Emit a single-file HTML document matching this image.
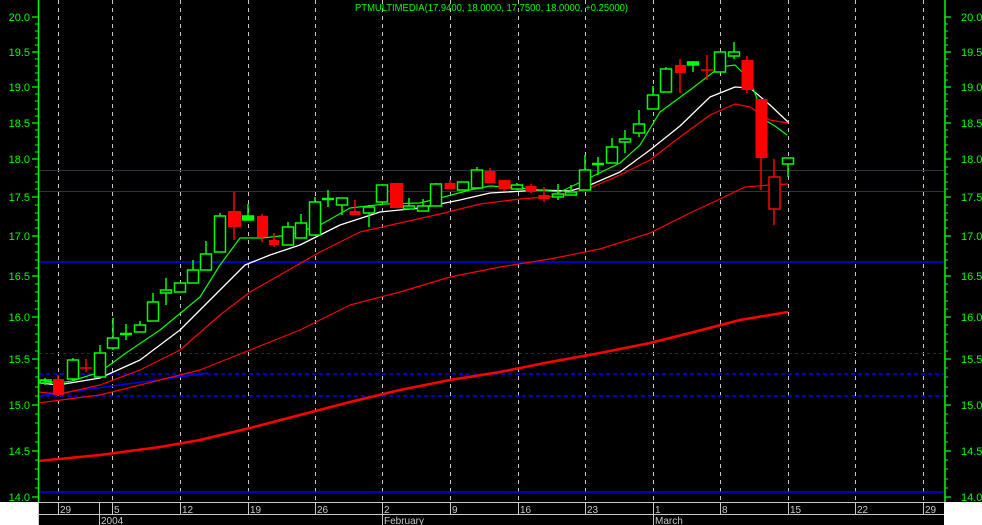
<!DOCTYPE html>
<html><head><meta charset="utf-8"><style>
html,body{margin:0;padding:0;background:#000;width:982px;height:525px;overflow:hidden}
svg{display:block;font-family:"Liberation Sans",sans-serif}
</style></head><body>
<svg width="982" height="525" viewBox="0 0 982 525" xmlns="http://www.w3.org/2000/svg">
<rect width="982" height="525" fill="#000"/>
<g stroke="#c8c8c8" stroke-width="1" stroke-dasharray="4,4">
<line x1="58.5" y1="0" x2="58.5" y2="502"/><line x1="112.5" y1="0" x2="112.5" y2="502"/>
<line x1="180.5" y1="0" x2="180.5" y2="502"/><line x1="248.5" y1="0" x2="248.5" y2="502"/>
<line x1="315.5" y1="0" x2="315.5" y2="502"/><line x1="382.5" y1="0" x2="382.5" y2="502"/>
<line x1="450.5" y1="0" x2="450.5" y2="502"/><line x1="518.5" y1="0" x2="518.5" y2="502"/>
<line x1="585.5" y1="0" x2="585.5" y2="502"/><line x1="653.5" y1="0" x2="653.5" y2="502"/>
<line x1="720.5" y1="0" x2="720.5" y2="502"/><line x1="788.5" y1="0" x2="788.5" y2="502"/>
<line x1="855.5" y1="0" x2="855.5" y2="502"/><line x1="923.5" y1="0" x2="923.5" y2="502"/>
</g>
<g stroke="#0000ff" fill="none">
<line x1="39" y1="170.5" x2="944" y2="170.5" stroke="#303040"/>
<line x1="39" y1="191.5" x2="944" y2="191.5" stroke="#303040"/>
<line x1="39" y1="262" x2="944" y2="262" stroke-width="1.5"/>
<line x1="39" y1="353.5" x2="944" y2="353.5" stroke="#262626" stroke-dasharray="3,3"/>
<line x1="39" y1="374" x2="944" y2="374" stroke-width="1.5" stroke-dasharray="4,3"/>
<line x1="39" y1="396" x2="944" y2="396" stroke-width="1.5" stroke-dasharray="4,3"/>
<line x1="39" y1="492" x2="944" y2="492" stroke-width="1.5"/>
<line x1="39" y1="396" x2="208" y2="373" stroke-width="1.5"/>
</g>
<g fill="none" stroke-linejoin="round">
<polyline stroke="#ff0000" stroke-width="2.5" points="38,461 100,455 160,447 200,440 250,428 300,415 350,402 400,390 450,380 500,372 550,362 600,353 650,343 690,333 740,320 788,312"/>
<polyline stroke="#ff0000" stroke-width="1.2" points="38,403 100,395 160,380 200,370 250,350 300,330 350,305 400,292 450,277 500,267 550,259 600,249 650,233 690,213 720,199 745,187 770,185 788,184"/>
<polyline stroke="#ff0000" stroke-width="1.2" points="38,392 60,394 100,385 140,370 180,350 220,315 250,292 280,275 320,252 360,232 400,223 440,214 480,204 520,199 560,196 590,188 620,175 650,160 680,137 710,115 735,104 750,107 770,120 788,123"/>
<polyline stroke="#ffffff" stroke-width="1.3" points="40,383 58,385 100,378 140,360 180,330 220,290 245,265 270,255 300,245 340,225 380,212 420,208 460,200 490,193 540,190 570,191 590,185 620,172 650,150 680,126 710,97 735,87 750,88 770,105 788,122"/>
<polyline stroke="#00ff00" stroke-width="1.2" points="40,380 58,383 72,381 100,372 126,353 160,330 200,297 220,265 240,238 262,238 290,235 320,225 350,208 385,204 420,203 440,198 470,190 490,186 520,188 560,192 585,180 620,163 640,145 660,112 690,90 720,67 735,65 750,80 765,120 775,126 787,135"/>
</g>
<g stroke-width="1.5">
<g stroke="#00ff00" fill="none">
<line x1="45" y1="378" x2="45" y2="385"/><rect x="40" y="380" width="11" height="3"/>
<line x1="73" y1="358" x2="73" y2="381"/><rect x="67.5" y="360" width="11" height="19" fill="#000"/>
<line x1="100" y1="345" x2="100" y2="378"/><rect x="94.5" y="353" width="11" height="24" fill="#000"/>
<line x1="113" y1="318" x2="113" y2="350"/><rect x="107.5" y="338" width="11" height="10" fill="#000"/>
<line x1="126" y1="324" x2="126" y2="340"/><line x1="120" y1="334" x2="132" y2="334" stroke-width="2.5"/>
<line x1="140" y1="321" x2="140" y2="332"/><rect x="134.5" y="325" width="11" height="7" fill="#000"/>
<line x1="153" y1="293" x2="153" y2="321"/><rect x="147.5" y="302" width="11" height="19" fill="#000"/>
<line x1="166" y1="278" x2="166" y2="305"/><rect x="160.5" y="290" width="11" height="3" fill="#000"/>
<line x1="180" y1="283" x2="180" y2="292"/><rect x="174.5" y="283" width="11" height="9" fill="#000"/>
<line x1="193" y1="260" x2="193" y2="283"/><rect x="187.5" y="270" width="11" height="13" fill="#000"/>
<line x1="206" y1="241" x2="206" y2="270"/><rect x="200.5" y="254" width="11" height="16" fill="#000"/>
<line x1="220" y1="213" x2="220" y2="252"/><rect x="214.5" y="216" width="11" height="36" fill="#000"/>
<line x1="248" y1="204" x2="248" y2="220"/><rect x="242.5" y="216" width="11" height="4" fill="#00ff00"/>
<line x1="288" y1="222" x2="288" y2="245"/><rect x="282.5" y="227" width="11" height="18" fill="#000"/>
<line x1="301" y1="214" x2="301" y2="238"/><rect x="295.5" y="223" width="11" height="15" fill="#000"/>
<line x1="315" y1="197" x2="315" y2="235"/><rect x="309.5" y="202" width="11" height="33" fill="#000"/>
<line x1="328" y1="190" x2="328" y2="207"/><line x1="322" y1="199" x2="334" y2="199" stroke-width="2.5"/>
<line x1="342" y1="198" x2="342" y2="215"/><rect x="336.5" y="198" width="11" height="7" fill="#000"/>
<line x1="369" y1="205" x2="369" y2="227"/><rect x="363.5" y="207" width="11" height="6" fill="#000"/>
<line x1="382" y1="185" x2="382" y2="202"/><rect x="376.5" y="185" width="11" height="17" fill="#000"/>
<line x1="409" y1="198" x2="409" y2="209"/><rect x="403.5" y="206" width="11" height="3" fill="#000"/>
<line x1="423" y1="199" x2="423" y2="211"/><rect x="417.5" y="206" width="11" height="5" fill="#000"/>
<line x1="436" y1="183" x2="436" y2="206"/><rect x="430.5" y="184" width="11" height="22" fill="#000"/>
<line x1="463" y1="182" x2="463" y2="190"/><rect x="457.5" y="182" width="11" height="8" fill="#000"/>
<line x1="477" y1="167" x2="477" y2="188"/><rect x="471.5" y="170" width="11" height="18" fill="#000"/>
<line x1="517" y1="183" x2="517" y2="190"/><rect x="511.5" y="185" width="11" height="4" fill="#000"/>
<line x1="558" y1="184" x2="558" y2="200"/><rect x="552.5" y="194" width="11" height="3" fill="#000"/>
<line x1="571" y1="185" x2="571" y2="195"/><rect x="565.5" y="192" width="11" height="3" fill="#000"/>
<line x1="585" y1="155" x2="585" y2="190"/><rect x="579.5" y="170" width="11" height="20" fill="#000"/>
<line x1="598" y1="157" x2="598" y2="175"/><line x1="592" y1="164" x2="604" y2="164" stroke-width="2.5"/>
<line x1="612" y1="138" x2="612" y2="163"/><rect x="606.5" y="147" width="11" height="16" fill="#000"/>
<line x1="625" y1="130" x2="625" y2="153"/><rect x="619.5" y="139" width="11" height="3" fill="#000"/>
<line x1="639" y1="110" x2="639" y2="137"/><rect x="633.5" y="124" width="11" height="9" fill="#000"/>
<line x1="653" y1="86" x2="653" y2="109"/><rect x="647.5" y="95" width="11" height="14" fill="#000"/>
<line x1="666" y1="67" x2="666" y2="92"/><rect x="660.5" y="69" width="11" height="23" fill="#000"/>
<line x1="693" y1="61" x2="693" y2="72"/><rect x="687.5" y="62" width="11" height="3" fill="#00ff00"/>
<line x1="720" y1="52" x2="720" y2="72"/><rect x="714.5" y="52" width="11" height="20" fill="#000"/>
<line x1="734" y1="42" x2="734" y2="59"/><rect x="728.5" y="52" width="11" height="4" fill="#000"/>
<line x1="788" y1="158" x2="788" y2="177"/><rect x="782.5" y="158" width="11" height="6" fill="#000"/>
</g>
<g stroke="#ff0000" fill="#ff0000">
<line x1="58" y1="375" x2="58" y2="396"/><rect x="53" y="379" width="11" height="16" stroke="none"/>
<line x1="86" y1="359" x2="86" y2="372"/><line x1="80" y1="368" x2="92" y2="368"/>
<line x1="234" y1="192" x2="234" y2="240"/><rect x="228" y="211" width="13" height="16" stroke="none"/>
<line x1="262" y1="214" x2="262" y2="242"/><rect x="257" y="216" width="11" height="21" stroke="none"/>
<line x1="274" y1="233" x2="274" y2="247"/><rect x="269" y="240" width="10" height="5" stroke="none"/>
<line x1="355" y1="200" x2="355" y2="215"/><rect x="349.5" y="211" width="11" height="4" stroke="none"/>
<line x1="396" y1="183" x2="396" y2="208"/><rect x="390" y="183" width="13" height="25" stroke="none"/>
<line x1="450" y1="180" x2="450" y2="189"/><rect x="444.5" y="183" width="11" height="6" stroke="none"/>
<line x1="490" y1="168" x2="490" y2="183"/><rect x="484.5" y="171" width="11" height="12" stroke="none"/>
<line x1="504" y1="180" x2="504" y2="191"/><rect x="498.5" y="180" width="12" height="9" stroke="none"/>
<line x1="531" y1="184" x2="531" y2="193"/><rect x="525.5" y="186" width="11" height="6" stroke="none"/>
<line x1="544" y1="187" x2="544" y2="202"/><rect x="538.5" y="195" width="11" height="4" stroke="none"/>
<line x1="680" y1="59" x2="680" y2="93"/><rect x="675" y="65" width="11" height="8" stroke="none"/>
<line x1="707" y1="55" x2="707" y2="80"/><line x1="701" y1="70" x2="713" y2="70"/>
<line x1="747" y1="56" x2="747" y2="93"/><rect x="741.5" y="60" width="12" height="30" stroke="none"/>
<line x1="761" y1="99" x2="761" y2="190"/><rect x="755.5" y="99" width="12" height="59" stroke="none"/>
<line x1="774" y1="159" x2="774" y2="225"/><rect x="769" y="177" width="11" height="32" fill="#000"/>
</g>
</g>
<text x="355" y="11" fill="#00ff00" font-size="10.5" textLength="273" lengthAdjust="spacingAndGlyphs">PTMULTIMEDIA(17.9400, 18.0000, 17.7500, 18.0000, +0.25000)</text>
<line x1="38.5" y1="0" x2="38.5" y2="502" stroke="#00ff00" stroke-width="1.5"/>
<line x1="945" y1="0" x2="945" y2="502" stroke="#00ff00" stroke-width="1.5"/>
<g stroke="#00ff00" stroke-width="1.2" fill="none">
<path d="M32 17h6M32 52h6M32 87h6M32 123h6M32 159h6M32 197h6M32 236h6M32 276h6M32 317h6M32 359h6M32 405h6M32 451h6M32 497h6
M945 17h6M945 52h6M945 87h6M945 123h6M945 159h6M945 197h6M945 236h6M945 276h6M945 317h6M945 359h6M945 405h6M945 451h6M945 497h6"/>
<path stroke-width="1" d="M35 24h3M35 31h3M35 38h3M35 45h3M35 59h3M35 66h3M35 73h3M35 80h3M35 94h3M35 101h3M35 109h3M35 116h3M35 130h3M35 137h3M35 145h3M35 152h3M35 167h3M35 174h3M35 182h3M35 189h3M35 205h3M35 213h3M35 220h3M35 228h3M35 244h3M35 252h3M35 260h3M35 268h3M35 284h3M35 292h3M35 301h3M35 309h3M35 325h3M35 334h3M35 342h3M35 351h3M35 368h3M35 377h3M35 387h3M35 396h3M35 414h3M35 423h3M35 433h3M35 442h3M35 460h3M35 469h3M35 479h3M35 488h3
M945 24h3M945 31h3M945 38h3M945 45h3M945 59h3M945 66h3M945 73h3M945 80h3M945 94h3M945 101h3M945 109h3M945 116h3M945 130h3M945 137h3M945 145h3M945 152h3M945 167h3M945 174h3M945 182h3M945 189h3M945 205h3M945 213h3M945 220h3M945 228h3M945 244h3M945 252h3M945 260h3M945 268h3M945 284h3M945 292h3M945 301h3M945 309h3M945 325h3M945 334h3M945 342h3M945 351h3M945 368h3M945 377h3M945 387h3M945 396h3M945 414h3M945 423h3M945 433h3M945 442h3M945 460h3M945 469h3M945 479h3M945 488h3"/>
</g>
<g fill="#00ff00" font-size="11">
<g text-anchor="end">
<text x="30" y="21">20.0</text><text x="30" y="56">19.5</text><text x="30" y="91">19.0</text><text x="30" y="127">18.5</text><text x="30" y="163">18.0</text><text x="30" y="201">17.5</text><text x="30" y="240">17.0</text><text x="30" y="280">16.5</text><text x="30" y="321">16.0</text><text x="30" y="363">15.5</text><text x="30" y="409">15.0</text><text x="30" y="455">14.5</text><text x="30" y="501">14.0</text>
</g>
<g>
<text x="961" y="21">20.0</text><text x="961" y="56">19.5</text><text x="961" y="91">19.0</text><text x="961" y="127">18.5</text><text x="961" y="163">18.0</text><text x="961" y="201">17.5</text><text x="961" y="240">17.0</text><text x="961" y="280">16.5</text><text x="961" y="321">16.0</text><text x="961" y="363">15.5</text><text x="961" y="409">15.0</text><text x="961" y="455">14.5</text><text x="961" y="501">14.0</text>
</g>
</g>
<rect x="0" y="502" width="38" height="23" fill="#fff"/>
<rect x="944" y="502" width="38" height="23" fill="#fff"/>
<g stroke="#c8c8c8" stroke-width="1">
<line x1="38" y1="502.5" x2="944" y2="502.5"/>
<line x1="38" y1="514.5" x2="944" y2="514.5"/>
<line x1="38.5" y1="502" x2="38.5" y2="525"/>
<line x1="58.5" y1="502" x2="58.5" y2="514"/><line x1="112.5" y1="502" x2="112.5" y2="514"/>
<line x1="180.5" y1="502" x2="180.5" y2="514"/><line x1="248.5" y1="502" x2="248.5" y2="514"/>
<line x1="315.5" y1="502" x2="315.5" y2="514"/><line x1="382.5" y1="502" x2="382.5" y2="525"/>
<line x1="450.5" y1="502" x2="450.5" y2="514"/><line x1="518.5" y1="502" x2="518.5" y2="514"/>
<line x1="585.5" y1="502" x2="585.5" y2="514"/><line x1="653.5" y1="502" x2="653.5" y2="525"/>
<line x1="720.5" y1="502" x2="720.5" y2="514"/><line x1="788.5" y1="502" x2="788.5" y2="514"/>
<line x1="855.5" y1="502" x2="855.5" y2="514"/><line x1="923.5" y1="502" x2="923.5" y2="514"/>
<line x1="99.5" y1="502" x2="99.5" y2="525"/>
</g>
<g fill="#c8c8c8" font-size="10">
<text x="60" y="513">29</text><text x="114" y="513">5</text><text x="182" y="513">12</text><text x="250" y="513">19</text><text x="317" y="513">26</text><text x="384" y="513">2</text><text x="452" y="513">9</text><text x="520" y="513">16</text><text x="587" y="513">23</text><text x="655" y="513">1</text><text x="722" y="513">8</text><text x="790" y="513">15</text><text x="857" y="513">22</text><text x="925" y="513">29</text>
<text x="101" y="524">2004</text><text x="384" y="524">February</text><text x="655" y="524">March</text>
</g>
</svg>
</body></html>
